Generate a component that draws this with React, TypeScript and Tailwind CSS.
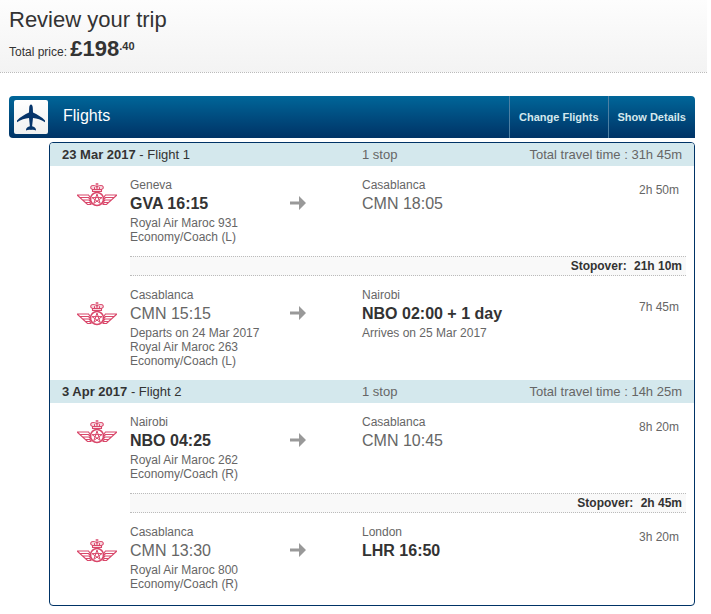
import clsx from 'clsx'

type Stop = {
  city: string
  code: string
  strong?: boolean
  details: string[]
}

type Leg = {
  from: Stop
  to: Stop
  duration: string
  stopover?: string
}

type Flight = {
  date: string
  name: string
  stops: string
  total: string
  legs: Leg[]
}

const flights: Flight[] = [
  {
    date: '23 Mar 2017',
    name: 'Flight 1',
    stops: '1 stop',
    total: '31h 45m',
    legs: [
      {
        from: { city: 'Geneva', code: 'GVA 16:15', strong: true, details: ['Royal Air Maroc 931', 'Economy/Coach (L)'] },
        to: { city: 'Casablanca', code: 'CMN 18:05', details: [] },
        duration: '2h 50m',
        stopover: '21h 10m',
      },
      {
        from: {
          city: 'Casablanca',
          code: 'CMN 15:15',
          details: ['Departs on 24 Mar 2017', 'Royal Air Maroc 263', 'Economy/Coach (L)'],
        },
        to: { city: 'Nairobi', code: 'NBO 02:00 + 1 day', strong: true, details: ['Arrives on 25 Mar 2017'] },
        duration: '7h 45m',
      },
    ],
  },
  {
    date: '3 Apr 2017',
    name: 'Flight 2',
    stops: '1 stop',
    total: '14h 25m',
    legs: [
      {
        from: { city: 'Nairobi', code: 'NBO 04:25', strong: true, details: ['Royal Air Maroc 262', 'Economy/Coach (R)'] },
        to: { city: 'Casablanca', code: 'CMN 10:45', details: [] },
        duration: '8h 20m',
        stopover: '2h 45m',
      },
      {
        from: { city: 'Casablanca', code: 'CMN 13:30', details: ['Royal Air Maroc 800', 'Economy/Coach (R)'] },
        to: { city: 'London', code: 'LHR 16:50', strong: true, details: [] },
        duration: '3h 20m',
      },
    ],
  },
]

function PlaneIcon() {
  return (
    <svg viewBox="0 0 28 28" className="h-7 w-7" fill="#06356b" aria-hidden="true">
      <path d="M14 1.500c1 0 1.700 1.500 1.800 3.500l.2 4.500c4 2 9 4.500 12 8v1.800c-4-2.800-8-4-12-4.300l-.9 8.200c2.200.6 3.700 1.800 3.900 3.600v.8c-1.600-.8-3.200-1-5-.6-1.800-.4-3.400-.2-5 .6v-.8c.2-1.800 1.700-3 3.900-3.600L12 15c-4 .3-8 1.500-12 4.300v-1.800c3-3.500 8-6 12-8l.2-4.500c.1-2 .8-3.500 1.800-3.500z" />
    </svg>
  )
}

function AirlineLogo() {
  return (
    <svg viewBox="0 0 40 24" className="h-6 w-10" fill="none" stroke="#d9476a" role="img" aria-label="Royal Air Maroc">
      {/* wings */}
      <path d="M0 12h11.500l2.500 3.500M3 14.500h8.500l2.500 2.500M6 17h6l2 2M8.500 19.500h4l2 1.500M0 12l10.500 9.500h4" strokeWidth="1.200" />
      <path d="M40 12h-11.500l-2.500 3.500M37 14.500h-8.500l-2.500 2.500M34 17h-6l-2 2M31.500 19.500h-4l-2 1.500M40 12l-10.500 9.500h-4" strokeWidth="1.200" />
      {/* star in circle */}
      <circle cx="20" cy="16" r="6.500" strokeWidth="1.500" />
      <path d="M20 11l3.200 9.400-8.200-5.800h10l-8.200 5.800z" strokeWidth="1" />
      {/* crown */}
      <path d="M15.500 8.500v-2c-3-1-2-4 .5-4s3 0 4 1.500c1-1.500 1.500-1.500 4-1.500s3.500 3 .5 4v2z" fill="#d9476a" fillOpacity="0.200" strokeWidth="1.100" />
      <path d="M15.500 6.500h9M20 0v6M18.500 1h3M17.500 4.200v2M22.500 4.200v2" strokeWidth="1" />
    </svg>
  )
}

function ArrowIcon() {
  return (
    <svg viewBox="0 0 16 14" className="h-3.5 w-4" fill="#999" aria-hidden="true">
      <path d="M0 5.500h9V0l7 7-7 7V8.500H0z" />
    </svg>
  )
}

function StopInfo({ stop }: { stop: Stop }) {
  return (
    <div>
      <div>{stop.city}</div>
      <div className={clsx('text-base leading-6', stop.strong && 'font-bold text-[#333]')}>{stop.code}</div>
      {stop.details.map((line) => (
        <div key={line}>{line}</div>
      ))}
    </div>
  )
}

function LegRow({ leg, connecting }: { leg: Leg; connecting: boolean }) {
  return (
    <>
      <div className="grid grid-cols-[80px_160px_72px_1fr_auto] py-3 pr-[15px] text-xs leading-[14px]">
        <div className={clsx('pl-[27px]', connecting ? 'pt-3.5' : 'pt-[5px]')}>
          <AirlineLogo />
        </div>
        <StopInfo stop={leg.from} />
        <div className="pt-[18px]">
          <ArrowIcon />
        </div>
        <StopInfo stop={leg.to} />
        <div className="self-center pb-[42px]">{leg.duration}</div>
      </div>
      {leg.stopover && (
        <div className="mr-2 ml-20 border-y border-dotted border-[#bbb] bg-[#f9f9f9] pr-1 text-right text-xs leading-[18px] font-bold text-[#333]">
          Stopover: <span className="ml-1">{leg.stopover}</span>
        </div>
      )}
    </>
  )
}

function FlightSection({ flight }: { flight: Flight }) {
  return (
    <section>
      <div className="flex bg-[#d4e8ed] px-3 text-[13px] leading-[23px]">
        <h3 className="w-[300px] text-[#333]">
          <b>{flight.date}</b> - {flight.name}
        </h3>
        <div className="flex-1">{flight.stops}</div>
        <div>Total travel time : {flight.total}</div>
      </div>
      {flight.legs.map((leg, i) => (
        <LegRow key={leg.from.code} leg={leg} connecting={i > 0} />
      ))}
    </section>
  )
}

export default function App() {
  return (
    <div className="bg-white pb-2 font-['Liberation_Sans',Arial,sans-serif] text-[#666]">
      <header className="mr-1 border-b border-dotted border-[#bbb] bg-linear-to-b from-[#fdfdfd] to-[#f3f3f3] px-[9px] pt-[7px] pb-px text-[#333]">
        <h1 className="text-[22px] leading-[26px]">Review your trip</h1>
        <p className="text-xs leading-[38px]">
          Total price: <b className="text-[22px] leading-none">£198</b>
          <b className="align-[6px] text-[11px] leading-none">.40</b>
        </p>
      </header>

      <main className="mt-[23px] mr-4 ml-[9px]">
        <div className="flex h-[42px] items-stretch rounded-t rounded-bl bg-linear-to-b from-[#006699] to-[#003366] text-white">
          <div className="m-1 mr-[15px] ml-[5px] flex w-[34px] items-center justify-center rounded-xs bg-linear-to-b from-white to-[#f0f0f0]">
            <PlaneIcon />
          </div>
          <h2 className="flex-1 text-base leading-10">Flights</h2>
          <button className="border-l border-[#4d7fa3] px-[9px] text-[11px] font-bold text-[#d4e8ed]">Change Flights</button>
          <button className="border-l border-[#4d7fa3] px-[9px] text-[11px] font-bold text-[#d4e8ed]">Show Details</button>
        </div>

        <div className="mt-1 ml-10 overflow-hidden rounded border border-[#003366] pb-0.5">
          {flights.map((flight) => (
            <FlightSection key={flight.name} flight={flight} />
          ))}
        </div>
      </main>
    </div>
  )
}
